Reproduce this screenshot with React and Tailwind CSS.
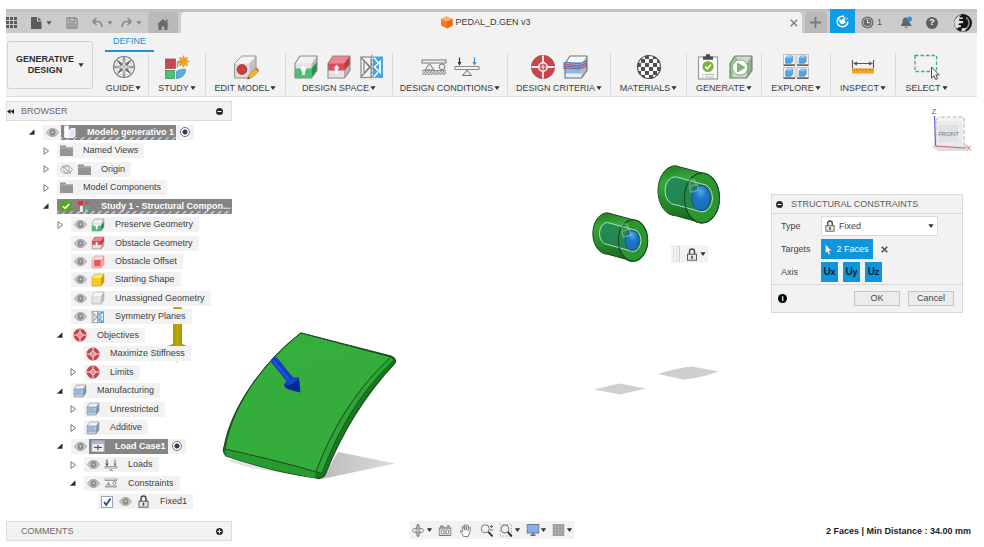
import React from "react";

/* ---------- small shared glyphs ---------- */

function Caret({ className = "text-[#2f2f2f]" }) {
  return (
    <svg className={"h-1 w-1.5 shrink-0 " + className} viewBox="0 0 6 4" fill="currentColor" aria-hidden="true">
      <path d="M.4.2h5.2L3 3.9z" />
    </svg>
  );
}

function Eye({ off }) {
  return (
    <svg className="h-[9px] w-[13px]" viewBox="0 0 13 9" aria-hidden="true">
      <path d="M.5 4.5C2.6 1.4 4.4.6 6.5.6s3.9.8 6 3.9C10.4 7.6 8.6 8.4 6.5 8.4S2.600 7.600.5 4.500z" fill={off ? "#f7f7f7" : "#cfcfcf"} stroke="#9a9a9a" strokeWidth="1" />
      <circle cx="6.5" cy="4.5" r="2.9" fill={off ? "none" : "#858585"} stroke="#9a9a9a" strokeWidth=".8" />
      {off ? <path d="M2 .8l9 7.6" stroke="#9a9a9a" strokeWidth="1" /> : <circle cx="6.5" cy="4.3" r="1.1" fill="#d8d8d8" />}
    </svg>
  );
}

function Block({ front, top, side, line = "#8a8a8a", className = "h-[26px] w-[26px]", children }) {
  return (
    <svg className={className} viewBox="0 0 26 26" aria-hidden="true" strokeLinejoin="round">
      <path d="M2 9.5L7 2h17v14.500L18.500 24H2z" fill={front} />
      <path d="M2 9.5L7 2h17l-5.500 7.500z" fill={top} />
      <path d="M18.500 9.500L24 2v14.500L18.500 24z" fill={side} />
      {children}
      <path d="M2 9.500L7 2h17v14.500L18.500 24H2z" fill="none" stroke={line} strokeWidth="1.1" />
    </svg>
  );
}

const SMALL = "h-[14px] w-[14px]";
const BIG = "h-[26px] w-[26px]";

function PreserveIcon({ className = BIG }) {
  return (
    <Block className={className} front="#e4e4e4" top="#f1f1f1" side="#bdbdbd">
      <path d="M2 14.500h16.500V24H2z" fill="#45c274" />
      <path d="M18.500 14.500L24 7.500v9L18.500 24z" fill="#249250" />
      <path d="M8 15.500a2.600 2.600 0 115 0c0 1.300-1.200 1.800-1.200 3v2.500H9.300v-2.500c0-1.200-1.300-1.700-1.300-3z" fill="#fff" />
    </Block>
  );
}

function ObstacleIcon({ className = BIG }) {
  return (
    <Block className={className} front="#d84e58" top="#f0848a" side="#b83b45">
      <path d="M2 16.500h16.500V24H2z" fill="#e2e2e2" />
      <path d="M18.500 16.500L24 10v6.500L18.500 24z" fill="#b5b5b5" />
      <path d="M10.500 10.500l3 4h-1.600v5H9v-5H7.400z" fill="#fff" />
    </Block>
  );
}

function SymmetryIcon({ className = BIG }) {
  return (
    <svg className={className} viewBox="0 0 26 26" aria-hidden="true">
      <rect x="2" y="3" width="10" height="20.500" fill="#f4f4f4" stroke="#8e8e8e" strokeWidth="1.300" />
      <rect x="14" y="2.500" width="10" height="21.500" fill="#4aa6e2" />
      <path d="M5 6.500v13l5.500-6.500zM2 3.500l9.500 9.500L2 23" fill="none" stroke="#858585" strokeWidth="1.200" />
      <path d="M22 6l-7 7 7 7" fill="#f4f9fd" stroke="#f4f9fd" strokeWidth="1" />
      <path d="M15 3.500l4 5M15 23l4-5" fill="none" stroke="#f4f9fd" strokeWidth="1.400" />
      <path d="M20 9.500v7L16.500 13z" fill="#4aa6e2" />
      <path d="M13 1v24.500" stroke="#777" strokeWidth="1" strokeDasharray="3 1" />
    </svg>
  );
}

function TargetIcon({ className = BIG }) {
  return (
    <svg className={className} viewBox="0 0 26 26" aria-hidden="true">
      <circle cx="13" cy="13" r="8.300" fill="#fff" stroke="#c9454c" strokeWidth="6.800" />
      <circle cx="13" cy="13" r="11.600" fill="none" stroke="#a5464c" strokeWidth=".8" />
      <path d="M13 1.500v23M1.500 13h23" stroke="#f2f2f2" strokeWidth="1.800" />
      <circle cx="13" cy="13" r="4" fill="#c9454c" stroke="#f5e6e6" strokeWidth="1.300" />
      <path d="M13 10.500v5M10.500 13h5" stroke="#f5e6e6" strokeWidth="1.200" />
    </svg>
  );
}

function LayersIcon({ className = BIG }) {
  return (
    <Block className={className} front="#e9edf1" top="#fafafa" side="#b4b9be" line="#6b6f74">
      <path d="M2 8.500h16.500v11H2z" fill="#86bce8" />
      <path d="M0 11c6-1.500 12 1.500 18.500 0L24 8.500M0 14.500c6-1.500 12 1.500 18.500 0L24 12" fill="none" stroke="#b8435a" strokeWidth="1" />
      <path d="M0 9c6-1.500 12 1.500 18.500 0L24 6.500M0 12.800c6-1.500 12 1.500 18.500 0L24 10" fill="none" stroke="#2d5fb0" strokeWidth=".9" />
    </Block>
  );
}

function MakeIcon() {
  return (
    <Block className={SMALL} front="#b9d2e8" top="#eef1f4" side="#8f9aa6" line="#7d8794">
      <path d="M2 9.500h16.500M2 18.500h16.500L24 11" fill="none" stroke="#7490b3" strokeWidth="1.600" />
      <path d="M4 11h12v6H4z" fill="#9ab8d8" />
    </Block>
  );
}

function Lock({ className = "h-[13px] w-[11px]" }) {
  return (
    <svg className={className} viewBox="0 0 11 13" aria-hidden="true">
      <path d="M3 6.500V3.700a2.500 2.700 0 015 0v2.800" fill="none" stroke="#4a4a4a" strokeWidth="1.500" />
      <rect x="1" y="6.200" width="9" height="6" fill="#e6e8ee" stroke="#5a5a5a" strokeWidth="1" />
      <path d="M5.500 7.700v3" stroke="#333a55" strokeWidth="1.500" />
    </svg>
  );
}

function Folder() {
  return (
    <svg className="h-[11px] w-[13px]" viewBox="0 0 13 11" aria-hidden="true">
      <path d="M0 .5h6v1.800h7V11H0z" fill="#949494" />
      <path d="M0 3h13" stroke="#bdbdbd" strokeWidth=".8" />
    </svg>
  );
}

function Support({ className = "h-[26px] w-[26px]" }) {
  return (
    <svg className={className} viewBox="0 0 26 26" aria-hidden="true">
      <rect x="1" y="6" width="24" height="3" fill="#f1f1f1" stroke="#777" strokeWidth="1" />
      <path d="M8.500 9.500l4.500 6.500H4z" fill="#ededed" stroke="#777" strokeWidth="1" />
      <circle cx="21" cy="12.800" r="2.900" fill="#ededed" stroke="#777" strokeWidth="1" />
      <path d="M1 16.500h24V21H1z" fill="#cccccc" />
      <path d="M1 21l4-4M4 21l4-4M7 21l4-4M10 21l4-4M13 21l4-4M16 21l4-4M19 21l4-4M22 21l3-3M1 16.500h24" stroke="#8a8a8a" strokeWidth=".9" />
    </svg>
  );
}

function LoadsIcon({ className = "h-[26px] w-[26px]" }) {
  return (
    <svg className={className} viewBox="0 0 26 26" aria-hidden="true">
      <rect x="1" y="12.500" width="24" height="3" fill="#f3f3f3" stroke="#8a8a8a" strokeWidth="1" />
      <path d="M13 16l4.500 5.500h-9z" fill="#e6e6e6" stroke="#777" strokeWidth="1" />
      <path d="M5.500 3.500v6" stroke="#333" strokeWidth="1.200" />
      <path d="M3.500 8h4l-2 3.800z" fill="#333" />
      <path d="M20.500 3.500v6" stroke="#2b93d6" strokeWidth="1.200" />
      <path d="M18.500 8h4l-2 3.800z" fill="#2b93d6" />
    </svg>
  );
}

/* ---------- ribbon artwork ---------- */

function CompassIcon() {
  return (
    <svg className={BIG} viewBox="0 0 26 26" aria-hidden="true">
      <circle cx="13" cy="13" r="10.500" fill="#fafafa" stroke="#7a7a7a" strokeWidth="1.100" />
      <circle cx="13" cy="13" r="8" fill="none" stroke="#b5b5b5" strokeWidth=".7" />
      <path d="M6.500 6.500l5 3.500-1.500 1.500zM19.500 6.500l-3.500 5-1.500-1.500zM6.500 19.500l3.500-5 1.500 1.500zM19.500 19.500l-5-3.500 1.500-1.500z" fill="#6d6d6d" stroke="#6d6d6d" strokeWidth="1" />
      <path d="M13 2l1.600 9.400L24 13l-9.400 1.600L13 24l-1.600-9.400L2 13l9.400-1.600z" fill="#fff" stroke="#777" strokeWidth=".7" />
      <path d="M13 2v22M2 13h22" stroke="#888" strokeWidth=".7" />
    </svg>
  );
}

function StudyIcon({ className = BIG }) {
  return (
    <svg className={className} viewBox="0 0 26 26" aria-hidden="true">
      <rect x="1.500" y="5" width="10" height="9.500" fill="#c8484f" stroke="#a8454b" strokeWidth=".7" />
      <rect x="1.500" y="16.500" width="9" height="8" fill="#52bd7a" stroke="#2c8a50" strokeWidth=".7" />
      <path d="M12.500 17.500c2-1.700 4.500-2.200 9-2-.3 5-3 8.500-9 9z" fill="#62aee4" stroke="#377fb5" strokeWidth=".7" />
      <path d="M13.500 13.500V8.500h3" fill="none" stroke="#52bd7a" strokeWidth="1.500" />
      <path d="M19.500 1.500l1.200 3 3-1.200-1.300 3L25.500 7.500l-3.100 1.200 1.300 3-3-1.200-1.200 3-1.200-3-3 1.200 1.300-3-3.100-1.200 3.100-1.200-1.300-3 3 1.200z" fill="#f3a21b" stroke="#db8a10" strokeWidth=".5" />
    </svg>
  );
}

function EditModelIcon() {
  return (
    <svg className={BIG} viewBox="0 0 26 26" aria-hidden="true">
      <path d="M1.500 9.500L9 2h14v13.500L16.500 24h-15z" fill="#dcdcdc" />
      <path d="M1.500 9.500L9 2h14l-6.500 7.500z" fill="#f3f3f3" />
      <path d="M16.500 9.500L23 2v13.500L16.500 24z" fill="#c2c2c2" />
      <path d="M1.500 9.500L9 2h14v13.500L16.500 24h-15z" fill="none" stroke="#969696" strokeWidth="1" strokeLinejoin="round" />
      <circle cx="9" cy="15.500" r="4.900" fill="#cb3f3f" stroke="#9c2c2c" strokeWidth=".8" />
      <path d="M14.500 25l1.300-4.200 6.500-6.300 3 3-6.600 6.200z" fill="#f0b429" stroke="#a77a18" strokeWidth=".6" />
      <path d="M22.300 14.500l3 3 .7-1.200-2.500-2.900z" fill="#e2504e" />
      <path d="M14.500 25l.6-2 1.500 1.500z" fill="#333" />
    </svg>
  );
}

function MaterialsIcon() {
  const cells = [];
  for (let r = 0; r < 6; r++) {
    for (let c = 0; c < 6; c++) {
      if ((r + c) % 2 === 0) cells.push(<rect key={r + "-" + c} x={1 + c * 4} y={1 + r * 4} width="4" height="4" />);
    }
  }
  return (
    <svg className={BIG} viewBox="0 0 26 26" aria-hidden="true">
      <defs>
        <clipPath id="ball"><circle cx="13" cy="13" r="12" /></clipPath>
      </defs>
      <circle cx="13" cy="13" r="12" fill="#fafafa" />
      <g clipPath="url(#ball)" fill="#505050">{cells}</g>
      <circle cx="13" cy="13" r="11.500" fill="none" stroke="#555" strokeWidth="1.200" />
    </svg>
  );
}

function ClipboardIcon() {
  return (
    <svg className={BIG} viewBox="0 0 26 26" aria-hidden="true">
      <rect x="3.500" y="3" width="19" height="22" fill="#fff" stroke="#999" strokeWidth="1.200" />
      <path d="M8 2.500h2.600a2.300 2.300 0 014.800 0H18v3.300H8z" fill="#4a4a4a" />
      <circle cx="13" cy="12.500" r="5.600" fill="#7fb238" />
      <path d="M10.300 12.600l2 2.100 3.500-4" fill="none" stroke="#fff" strokeWidth="1.600" />
      <path d="M7 20.500h1.500M10 20.500h9M7 23h1.500M10 23h9" stroke="#aaa" strokeWidth="1" />
    </svg>
  );
}

function PlayIcon() {
  return (
    <Block front="#c4dfbe" top="#d4d8d3" side="#8eb187" line="#777">
      <path d="M2 9.500L7 2l3 3-5 8v11H2z" fill="#8fca86" />
      <circle cx="12" cy="13.500" r="7.600" fill="#fff" stroke="#8ba886" strokeWidth="1" />
      <path d="M9.500 9l7.500 4.500-7.500 4.500z" fill="#76bd70" stroke="#56994f" strokeWidth=".6" />
    </Block>
  );
}

function ExploreIcon() {
  const tile = (x, y) => (
    <g key={x + "-" + y}>
      <rect x={x} y={y} width="11.500" height="10" fill="#eef4f9" stroke="#c0b5b0" strokeWidth=".8" />
      <path d={`M${x} ${y + 10.7}h11.500`} stroke="#555" strokeWidth="1.400" />
      <path d={`M${x + 2.2} ${y + 3.2}l1.700-1.700h5.200v5.300l-1.600 1.900h-5.300z`} fill="#56a6e4" stroke="#3c88c6" strokeWidth=".7" />
      <path d={`M${x + 2.2} ${y + 3.2}h5.300l1.600-1.700h-5.200z`} fill="#98cbf0" />
    </g>
  );
  return (
    <svg className={BIG} viewBox="0 0 26 26" aria-hidden="true">
      {[[0.5, 0.5], [14, 0.5], [0.5, 13.5], [14, 13.5]].map(([x, y]) => tile(x, y))}
    </svg>
  );
}

function InspectIcon() {
  return (
    <svg className={BIG} viewBox="0 0 26 26" aria-hidden="true">
      <path d="M2.500 6v8M23.500 6v8M4 9.500h18" stroke="#555" strokeWidth="1.100" />
      <path d="M3 9.500l4-2v4zM23 9.500l-4-2v4z" fill="#555" />
      <rect x="2" y="14.500" width="22" height="5" fill="#f5a51e" />
      <path d="M4 16.500v-2M7 16.500v-2M10 16.500v-2M13 16.500v-2M16 16.500v-2M19 16.500v-2M22 16.500v-2" stroke="#a96c0e" strokeWidth=".9" />
    </svg>
  );
}

function SelectIcon() {
  return (
    <svg className={BIG} viewBox="0 0 26 26" aria-hidden="true">
      <rect x="1" y="1.500" width="21.500" height="16" fill="none" stroke="#43b06a" strokeWidth="1.300" strokeDasharray="3.500 2" />
      <path d="M17.500 13v11l2.500-2.300 1.700 3.800 1.900-.9-1.700-3.700h3.300z" fill="#fff" stroke="#444" strokeWidth="1" />
    </svg>
  );
}

/* ---------- top bar ---------- */

function IconButton({ label, className = "", children }) {
  return (
    <button type="button" aria-label={label} className={"flex items-center justify-center " + className}>
      {children}
    </button>
  );
}

function TopBar() {
  return (
    <div className="flex h-6 items-stretch border-t-[3px] border-[#c1c1c1] bg-[#cbcbcb]">
      <div className="flex items-center gap-3.5 text-[#5c5c5c]">
        <IconButton label="Data panel">
          <svg className="h-[11px] w-[11px]" viewBox="0 0 11 11" fill="currentColor">
            {[0, 4, 8].map((y) => [0, 4, 8].map((x) => <rect key={x + "-" + y} x={x} y={y} width="3" height="3" />))}
          </svg>
        </IconButton>
        <IconButton label="File" className="gap-1">
          <svg className="h-3 w-[11px]" viewBox="0 0 11 12" fill="currentColor">
            <path d="M0 0h6v4.500h4.500V12H0zM7 0l3.500 3.500H7z" />
          </svg>
          <Caret className="text-[#5c5c5c]" />
        </IconButton>
        <IconButton label="Save">
          <svg className="h-3 w-3" viewBox="0 0 12 12" fill="none" stroke="#8a8a8a" strokeWidth="1.300">
            <path d="M1 1h8.500L11 2.500V11H1zM3.500 1v3.500h5V1M3 11V7h6v4M4.500 9h3" />
          </svg>
        </IconButton>
        <div className="flex gap-2 text-[#8a8a8a]">
          <IconButton label="Undo" className="gap-1">
            <svg className="h-[11px] w-[11px]" viewBox="0 0 11 11" fill="none" stroke="currentColor" strokeWidth="1.600">
              <path d="M4.500 1L1 4.500 4.500 8M1 4.500h5c2.500 0 3.800 1.500 3.800 5.500" />
            </svg>
            <Caret className="text-[#8a8a8a]" />
          </IconButton>
          <IconButton label="Redo" className="gap-1">
            <svg className="h-[11px] w-[11px]" viewBox="0 0 11 11" fill="none" stroke="currentColor" strokeWidth="1.600">
              <path d="M6.500 1L10 4.500 6.500 8M10 4.500H5C2.500 4.500 1.200 6 1.200 10" />
            </svg>
            <Caret className="text-[#8a8a8a]" />
          </IconButton>
        </div>
      </div>
      <IconButton label="Home" className="ml-1.5 w-[30px] rounded-t-sm bg-[#b9b9b9]">
        <svg className="mt-1 h-[11px] w-3" viewBox="0 0 12 11" fill="#686868">
          <path d="M6 0l6 5.500h-1.500V11H7.300V7.500H4.700V11H1.500V5.500H0L6 0zM9 .8h1.500v3L9 2.500z" />
        </svg>
      </IconButton>
      <div className="ml-[3px] flex flex-1 items-center rounded-t-sm bg-[#f2f2f2]">
        <div className="flex flex-1 items-center justify-center gap-0.5 text-[#3c3c3c]">
          <svg className="h-[13px] w-[13px]" viewBox="0 0 13 13" aria-hidden="true">
            <path d="M6.500.5L12.500 3v6.500l-5.500 3-6-3V3z" fill="#f47b20" />
            <path d="M6.500.5L12.500 3 7 5.500 1 3z" fill="#fbb06e" />
            <path d="M7 5.500L12.500 3v6.500l-5.500 3z" fill="#e56a18" />
          </svg>
          <span>PEDAL_D.GEN v3</span>
        </div>
        <IconButton label="Close document" className="mr-1 h-4 w-2">
          <svg className="h-2 w-2 shrink-0" viewBox="0 0 8 8" stroke="#7a7a7a" strokeWidth="1.300">
            <path d="M.8.8l6.400 6.400M7.200.8L.8 7.200" />
          </svg>
        </IconButton>
      </div>
      <IconButton label="New document" className="ml-[3px] w-[22px] rounded-t-sm bg-[#bababa]">
        <svg className="h-[11px] w-[11px]" viewBox="0 0 11 11" stroke="#7a7a7a" strokeWidth="1.800">
          <path d="M5.500 0v11M0 5.500h11" />
        </svg>
      </IconButton>
      <IconButton label="Extensions" className="-mt-[3px] ml-[3px] w-[25px] bg-[#0e9ce6]">
        <svg className="h-[13px] w-[13px]" viewBox="0 0 13 13">
          <circle cx="6.500" cy="6.500" r="5.300" fill="none" stroke="#fff" strokeWidth="1.600" strokeDasharray="26 3 1 3.300" />
          <path d="M3.200 4l2.300 1L9.500 1.500 8.700 5l1 2.500-3 1.800-2.200-.8-1.300-2z" fill="#fff" />
        </svg>
      </IconButton>
      <div className="flex items-center pl-1.5 text-[#555]">
        <IconButton label="Job status" className="gap-[3px]">
          <svg className="h-[13px] w-[13px]" viewBox="0 0 13 13">
            <circle cx="6.500" cy="6.500" r="6" fill="#686868" />
            <circle cx="6.500" cy="6.500" r="4.300" fill="none" stroke="#cbcbcb" strokeWidth=".9" />
            <path d="M6.500 3.500v3.200h2.500" fill="none" stroke="#e5e5e5" strokeWidth="1.100" />
          </svg>
          <span>1</span>
        </IconButton>
        <IconButton label="Notifications" className="ml-[18px]">
          <svg className="h-[13px] w-[13px]" viewBox="0 0 13 13">
            <path d="M6 1.500c2.200 0 3.500 1.500 3.500 3.700 0 2 .7 3 2 3.800v1H.7V9c1.200-.8 1.900-1.800 1.900-3.800C2.600 3 3.800 1.500 6 1.500zM4.500 10.700h3.200L6 12.500z" fill="#646464" />
            <circle cx="9.600" cy="3" r="2.500" fill="#1c9ce4" />
          </svg>
        </IconButton>
        <button type="button" aria-label="Help" className="ml-[13px] flex h-3 w-3 items-center justify-center rounded-full bg-[#5e5e5e] font-bold text-white">?</button>
        <button type="button" aria-label="Account" className="mr-[5px] ml-4 h-[18px] w-[18px]">
          <svg className="h-[18px] w-[18px]" viewBox="0 0 18 18">
            <circle cx="9" cy="9" r="9" fill="#151515" />
            <path d="M2 4.500C3.500 2 5 1.200 7 1L5 3.500h4L8.500 5H5l.5 2H9v2L5 9.500l-1 1 3 1v1.500l-3 .5L3.500 15C1.500 13.500.3 11.500.2 9c0-1.500.6-3.300 1.800-4.500z" fill="#dedede" />
            <path d="M12 3.500c2 1 3 3 3 5.500s-1.500 4.500-3 5.500" fill="none" stroke="#8a8a8a" strokeWidth="1.500" />
            <path d="M8 14l5 0-2.500 3.500H7z" fill="#cfcfcf" />
          </svg>
        </button>
      </div>
    </div>
  );
}

/* ---------- ribbon ---------- */

const GROUPS = [
  { label: "GUIDE", width: "w-[50px]", icons: [CompassIcon] },
  { label: "STUDY", width: "w-[57px]", icons: [StudyIcon] },
  { label: "EDIT MODEL", width: "w-[80px]", icons: [EditModelIcon] },
  { label: "DESIGN SPACE", width: "w-[107px]", icons: [PreserveIcon, ObstacleIcon, SymmetryIcon] },
  { label: "DESIGN CONDITIONS", width: "w-[115px]", icons: [Support, LoadsIcon] },
  { label: "DESIGN CRITERIA", width: "w-[103px]", icons: [TargetIcon, LayersIcon] },
  { label: "MATERIALS", width: "w-[76px]", icons: [MaterialsIcon] },
  { label: "GENERATE", width: "w-[75px]", icons: [ClipboardIcon, PlayIcon] },
  { label: "EXPLORE", width: "w-[69px]", icons: [ExploreIcon] },
  { label: "INSPECT", width: "w-[65px]", icons: [InspectIcon] },
  { label: "SELECT", width: "w-[61px]", icons: [SelectIcon] },
];

function Ribbon() {
  return (
    <div className="flex border-b border-[#dedede] bg-[#f2f2f2] pl-px">
      <button type="button" className="mt-2 flex h-12 w-[86px] shrink-0 items-center justify-center gap-1 rounded-[3px] border border-[#d2d2d2] font-bold text-[#2e2e2e]">
        <span className="leading-[11px]">GENERATIVE<br />DESIGN</span>
        <Caret />
      </button>
      <div className="ml-1.5 flex-1">
        <button type="button" className="ml-1.5 block h-[19px] w-[49px] border-b-2 border-[#1a93d4] text-[#1a93d4]">DEFINE</button>
        <div className="flex h-11">
          {GROUPS.map(({ label, width, icons }, i) => (
            <div
              key={label}
              className={"my-px flex shrink-0 flex-col items-center gap-0.5 pt-px " + width + (i < GROUPS.length - 1 ? " border-r border-[#d9d9d9]" : "")}
            >
              <div className="flex gap-[7px]">
                {icons.map((Icon, n) => <Icon key={n} />)}
              </div>
              <button type="button" className="flex h-3 items-center gap-px whitespace-nowrap text-[#3c3c3c]">
                {label}
                <Caret />
              </button>
            </div>
          ))}
        </div>
      </div>
    </div>
  );
}

/* ---------- browser tree ---------- */

const INDENT = ["pl-[15px]", "pl-[29px]", "pl-[43px]", "pl-[56px]", "pl-[70px]"];

const DocIcon = () => (
  <svg className={SMALL} viewBox="0 0 14 14">
    <path d="M1.500 1h4v11.500h-4z" fill="#fff" stroke="#e8e8e8" />
    <path d="M6.500 5l1.500-1.500h4V11l-1.500 1.500h-4z" fill="#dfe3f5" stroke="#fafafa" />
  </svg>
);
const CheckBadge = () => (
  <svg className="h-3 w-3" viewBox="0 0 12 12">
    <circle cx="6" cy="6" r="6" fill="#59a818" />
    <path d="M3 6.200l2.200 2.200L9.200 4" fill="none" stroke="#fff" strokeWidth="1.600" />
  </svg>
);
const StudyMini = () => (
  <svg className={SMALL} viewBox="0 0 14 14">
    <path d="M1 2h5v4H1z" fill="#d9363e" />
    <path d="M8 2h4.500v3.500H8z" fill="#e04d55" />
    <path d="M3 7h3v6H3z" fill="#e8e8e8" />
    <path d="M8 6.500h4V10H8z" fill="#4cb66c" />
    <path d="M8 10.500h3V13H8z" fill="#8fc1ec" />
  </svg>
);
const OffsetIcon = () => (
  <Block className={SMALL} front="#f7c3c5" top="#fbe0e0" side="#efabae" line="#d9787d">
    <path d="M6 9h12v12H6z" fill="#e0575e" />
  </Block>
);
const ShapeIcon = () => <Block className={SMALL} front="#f7ce1d" top="#fde87a" side="#c99f0c" line="#b8961f" />;
const UnassignedIcon = () => <Block className={SMALL} front="#e3e3e3" top="#f7f7f7" side="#bcbcbc" line="#a8a8a8" />;
const SmallPreserve = () => <PreserveIcon className={SMALL} />;
const SmallObstacle = () => <ObstacleIcon className={SMALL} />;
const SmallSymmetry = () => <SymmetryIcon className={SMALL} />;
const SmallTarget = () => <TargetIcon className={SMALL} />;
const SmallLoads = () => (
  <svg className={SMALL} viewBox="0 0 14 14">
    <path d="M1 8.500h12v1.500H1z" fill="#fff" stroke="#888" strokeWidth=".8" />
    <path d="M7 10.500L9.500 13h-5z" fill="#aaa" />
    <path d="M3 1.500v6M1.800 5.500L3 7.500l1.200-2" fill="none" stroke="#444" />
    <path d="M11 1.500v6M9.800 5.500l1.200 2 1.200-2" fill="none" stroke="#3a7fc0" />
  </svg>
);
const SmallSupport = () => (
  <svg className={SMALL} viewBox="0 0 14 14">
    <path d="M1 3h12v1.500H1z" fill="#fff" stroke="#888" strokeWidth=".8" />
    <path d="M4.500 5.500L6.500 9h-4z" fill="#999" />
    <circle cx="10.500" cy="7" r="1.500" fill="none" stroke="#888" />
    <path d="M1 9.500h12v2H1z" fill="#a5a5a5" />
  </svg>
);
const EyeOff = () => <Eye off />;
const LoadCaseIcon = () => (
  <svg className={SMALL} viewBox="0 0 14 14">
    <rect x="1" y="2" width="12" height="10.500" fill="#e9ecf3" stroke="#c6c6c6" />
    <path d="M1 2h12v3H1z" fill="#a9b4cf" />
    <path d="M3 8.500h8M7 6v5" stroke="#414c66" strokeWidth="1.200" />
  </svg>
);

const NODES = [
  { level: 0, arrow: "open", lead: [Eye], icon: [DocIcon], label: "Modelo generativo 1", selected: true, hatch: true, radio: "component" },
  { level: 1, arrow: "closed", icon: [Folder], label: "Named Views" },
  { level: 1, arrow: "closed", icon: [EyeOff, Folder], label: "Origin" },
  { level: 1, arrow: "closed", icon: [Folder], label: "Model Components" },
  { level: 1, arrow: "open", icon: [CheckBadge, StudyMini], label: "Study 1 - Structural Compon...", selected: true, hatch: true, fill: true },
  { level: 2, arrow: "closed", icon: [Eye, SmallPreserve], label: "Preserve Geometry" },
  { level: 2, icon: [Eye, SmallObstacle], label: "Obstacle Geometry" },
  { level: 2, icon: [Eye, OffsetIcon], label: "Obstacle Offset" },
  { level: 2, icon: [Eye, ShapeIcon], label: "Starting Shape" },
  { level: 2, icon: [Eye, UnassignedIcon], label: "Unassigned Geometry" },
  { level: 2, icon: [Eye, SmallSymmetry], label: "Symmetry Planes" },
  { level: 2, arrow: "open", icon: [SmallTarget], label: "Objectives" },
  { level: 3, icon: [SmallTarget], label: "Maximize Stiffness" },
  { level: 3, arrow: "closed", icon: [SmallTarget], label: "Limits" },
  { level: 2, arrow: "open", icon: [MakeIcon], label: "Manufacturing" },
  { level: 3, arrow: "closed", icon: [MakeIcon], label: "Unrestricted" },
  { level: 3, arrow: "closed", icon: [MakeIcon], label: "Additive" },
  { level: 2, arrow: "open", lead: [Eye], icon: [LoadCaseIcon], label: "Load Case1", selected: true, radio: "load case" },
  { level: 3, arrow: "closed", icon: [Eye, SmallLoads], label: "Loads" },
  { level: 3, arrow: "open", icon: [Eye, SmallSupport], label: "Constraints" },
  { level: 4, check: true, icon: [Eye, Lock], label: "Fixed1" },
];

function Slot({ children }) {
  return <span className="relative flex w-[18px] shrink-0 items-center justify-center">{children}</span>;
}

function TreeRow({ node }) {
  const { level, arrow, lead = [], icon, label, selected, hatch, fill, radio, check } = node;
  return (
    <li className={"flex min-h-4 flex-1 items-center " + INDENT[level]}>
      <span className="flex w-[22px] shrink-0 justify-center">
        {arrow && (
          <button type="button" aria-label={(arrow === "open" ? "Collapse " : "Expand ") + label}>
            <svg className="h-2 w-2" viewBox="0 0 8 8">
              {arrow === "open"
                ? <path d="M6.500 1.200v5.600H.9z" fill="#2c2c2c" />
                : <path d="M2 .6v6.800L6.500 4z" fill="#fff" stroke="#6a6a6a" strokeWidth=".9" />}
            </svg>
          </button>
        )}
      </span>
      <div className={"flex h-[15px] items-center bg-[#f2f2f2]" + (fill ? " min-w-0 flex-1" : "")}>
        {check && (
          <Slot>
            <input type="checkbox" defaultChecked aria-label={"Show " + label} className="peer h-3 w-3 appearance-none border border-[#9aa3b5] bg-white" />
            <svg className="pointer-events-none absolute hidden h-2.5 w-2.5 peer-checked:block" viewBox="0 0 10 10">
              <path d="M2 5l2.200 3L8.500 1.500" fill="none" stroke="#2b4596" strokeWidth="1.800" />
            </svg>
          </Slot>
        )}
        {lead.map((Icon, i) => <Slot key={i}><Icon /></Slot>)}
        <span
          className={
            "flex h-full items-center " +
            (selected ? "bg-[#858585] font-bold text-white " : "text-[#404040] ") +
            (hatch ? "bg-[repeating-linear-gradient(135deg,#b4c0da_0_2px,#858585_2px_5px)] bg-[length:100%_3px] bg-bottom bg-no-repeat " : "") +
            (fill ? "min-w-0 flex-1" : "")
          }
        >
          {icon.map((Icon, i) => <Slot key={i}><Icon /></Slot>)}
          <span className={"whitespace-nowrap pl-2 " + (selected ? "pr-0.5" : "pr-1.5")}>{label}</span>
        </span>
        {radio && (
          <Slot>
            <input
              type="radio"
              name={radio}
              defaultChecked
              aria-label={"Activate " + label}
              className="h-2.5 w-2.5 appearance-none rounded-full border border-[#6f7480] bg-[radial-gradient(circle,#2f3c55_0_2px,#fff_3px)]"
            />
          </Slot>
        )}
      </div>
    </li>
  );
}

function PanelHeader({ title, children, sign }) {
  return (
    <div className="flex h-5 shrink-0 items-center border border-[#dcdcdc] bg-[#f2f2f2] pr-2 text-[#6a6a6a]">
      <span className="flex w-3.5 shrink-0">{children}</span>
      <h2 className="flex-1">{title}</h2>
      <button type="button" aria-label={"Toggle " + title}>
        <svg className="h-[7px] w-[7px]" viewBox="0 0 7 7">
          <circle cx="3.500" cy="3.500" r="3.500" fill="#2b2b2b" />
          <path d={sign === "plus" ? "M1.500 3.500h4M3.500 1.500v4" : "M1.500 3.500h4"} stroke="#fff" strokeWidth="1" />
        </svg>
      </button>
    </div>
  );
}

function Browser() {
  return (
    <aside className="relative ml-1.5 flex min-h-0 w-[226px] flex-1 flex-col pt-1 pb-1.5">
      <PanelHeader title="BROWSER" sign="minus">
        <svg className="h-[5px] w-[7px]" viewBox="0 0 7 5" fill="#222">
          <path d="M3.500 0v5L0 2.500zM7 0v5L3.500 2.500z" />
        </svg>
      </PanelHeader>
      <ul className="mt-0.5 mb-2.5 flex flex-1 flex-col">
        {NODES.map((node) => <TreeRow key={node.label} node={node} />)}
      </ul>
      <PanelHeader title="COMMENTS" sign="plus" />
    </aside>
  );
}

/* ---------- 3D viewport ---------- */

function Cylinder({ back, front, rx, ry, bore }) {
  const [bx, by] = back;
  const [fx, fy] = front;
  return (
    <g>
      <path
        d={`M${bx} ${by - ry}L${fx} ${fy - ry}A${rx} ${ry} 0 0 1 ${fx} ${fy + ry}L${bx} ${by + ry}A${rx} ${ry} 0 0 1 ${bx} ${by - ry}z`}
        fill="url(#barrel)"
        stroke="#1d4a20"
        strokeWidth="1"
      />
      <ellipse cx={fx} cy={fy} rx={rx} ry={ry} fill="#2b962f" stroke="#1d4a20" strokeWidth="1.100" />
      <path
        d={`M${bx} ${by - bore.ry}L${fx} ${fy - bore.ry}A${bore.rx} ${bore.ry} 0 0 1 ${fx} ${fy + bore.ry}L${bx} ${by + bore.ry}A${bore.rx} ${bore.ry} 0 0 1 ${bx} ${by - bore.ry}z`}
        fill="#20855a"
        fillOpacity=".8"
        stroke="#b9dcc2"
        strokeWidth="1"
      />
      <path d={`M${fx} ${fy - ry}A${rx} ${ry} 0 0 0 ${fx} ${fy + ry}`} fill="none" stroke="#1d4a20" strokeWidth="1.100" />
      <ellipse cx={fx - bore.rx * 0.1} cy={fy} rx={bore.rx * 0.88} ry={bore.ry * 0.9} fill="url(#bore)" stroke="#134a86" strokeWidth=".8" />
      <g transform={`translate(${fx - rx * 0.5} ${fy - ry * 0.5}) rotate(-15)`} fill="none" stroke="#a9d4ae" strokeOpacity=".45" strokeWidth="1.500">
        <path d="M-3 -1v-2.500a3 3 0 016 0V-1M-4 0h8v6h-8z" />
      </g>
    </g>
  );
}

function Viewport() {
  return (
    <svg className="absolute inset-0 h-full w-full" viewBox="0 97 984 450" role="img" aria-label="Pedal model">
      <defs>
        <linearGradient id="barrel" x1="0" y1="0" x2="0.2" y2="1">
          <stop offset="0" stopColor="#1d7a22" />
          <stop offset=".3" stopColor="#35a83a" />
          <stop offset="1" stopColor="#176a1c" />
        </linearGradient>
        <radialGradient id="bore" cx=".5" cy=".25" r=".8">
          <stop offset="0" stopColor="#5aa5ea" />
          <stop offset=".35" stopColor="#1f7ac8" />
          <stop offset="1" stopColor="#1a6ab4" />
        </radialGradient>
        <linearGradient id="plate" x1="0.3" y1="0" x2="0.6" y2="1">
          <stop offset="0" stopColor="#35ae3c" />
          <stop offset="1" stopColor="#34ac3d" />
        </linearGradient>
        <linearGradient id="floor" x1="0" y1="0" x2="1" y2="0">
          <stop offset="0" stopColor="#bcbcbc" />
          <stop offset="1" stopColor="#dcdcdc" />
        </linearGradient>
        <linearGradient id="post" x1="0" y1="0" x2="1" y2="0">
          <stop offset="0" stopColor="#8f7d00" />
          <stop offset=".5" stopColor="#c0a900" />
          <stop offset="1" stopColor="#8f7d00" />
        </linearGradient>
      </defs>

      {/* starting-shape post behind the tree */}
      <path d="M173 308l2-1h5l2 1v36l5 2v1h-19v-1l5-2z" fill="url(#post)" />
      <circle cx="177" cy="362" r=".7" fill="#d8c45a" />

      {/* floor shadows */}
      <path d="M338 452L395 463.500 322 479z" fill="url(#floor)" />
      <path d="M228 461c8-4 20-4 30 0l50 14c-30-1-60-7-80-14z" fill="#e2e2e2" />
      <path d="M594 389.500L619 383.500 646 388.500 620 394.500z" fill="#cfcfcf" />
      <path d="M658 374Q680 367 692 366.500L719 371.500Q697 379 683 379.500z" fill="#cfcfcf" />

      {/* pedal plate */}
      <path d="M301 333L391 356Q397 359 395 363C364 396 342 432 325 475Q321 480 316 478C285 474 250 464 226 456Q222 452 224 447C232 404 266 360 301 333z" fill="#187a20" stroke="#1a4a1e" strokeWidth="1.100" />
      <path d="M225 449C256 456 290 464 316 472L315 478C285 473 250 464 226 456z" fill="#279a30" />
      <path d="M301 333L391 357C358 388 334 424 316 472C290 464 256 456 225 449C232 404 266 360 301 333z" fill="url(#plate)" stroke="#1a4a1e" strokeWidth="1" />
      <path d="M391 357L394 360C361 391 339 428 322 473L316 472C334 424 358 388 391 357z" fill="#2fa438" stroke="#1a4a1e" strokeWidth=".8" />

      {/* load arrow */}
      <path d="M275 361L292 382" stroke="#123fc0" strokeWidth="7.500" strokeLinecap="round" />
      <path d="M273.500 361L290 381" stroke="#1c58e0" strokeWidth="2" strokeLinecap="round" />
      <path d="M284 384.500C285 390 292 390 300.500 392.500 300 385 299.500 381 298.500 377.500 295 377 288 380 284 384.500z" fill="#0b2595" />
      <path d="M284 384.500C286 380 294 376 298.500 377.500 297 382 290 387 284 384.500z" fill="#1544c4" />

      {/* constrained bores */}
      <Cylinder back={[675.5, 190.7]} front={[702, 198]} rx={17.5} ry={25} bore={{ rx: 10.5, ry: 14 }} />
      <Cylinder back={[607.5, 233.5]} front={[633, 240.5]} rx={14.7} ry={20.7} bore={{ rx: 8, ry: 11 }} />

      {/* view cube */}
      <g>
        <path d="M931 147l6-3h30l3 4-6 3h-26z" fill="#dedede" />
        <path d="M936 120l3-3h25v28l-3 3-25-2z" fill="#f3f3f3" stroke="#b5b5b5" strokeWidth="1" strokeDasharray="4 2" />
        <path d="M937 121h25v27l-25-2z" fill="#e9eaec" />
        <path d="M939 125h19v17h-19z" fill="#e0e1e5" />
        <path d="M934.500 116L935.500 146" stroke="#6a5ae0" strokeWidth="1.200" />
        <path d="M935.500 146L966 148" stroke="#e0646a" strokeWidth="1.200" />
        <text x="948.5" y="136" fontSize="6" textAnchor="middle" fill="#6f757d">FRONT</text>
        <text x="934" y="114" fontSize="8" textAnchor="middle" fill="#6a5ae0">Z</text>
        <text x="969" y="151" fontSize="8" textAnchor="middle" fill="#e0646a">X</text>
      </g>
    </svg>
  );
}

function FloatingLock() {
  return (
    <div className="absolute top-[148px] left-[68.2%] flex h-[18px] items-center gap-1.5 bg-[#f2f2f2] px-px">
      <svg className="h-4 w-2" viewBox="0 0 8 16" stroke="#cfcfcf" strokeDasharray="1 1">
        <path d="M1.500 0v16M4.500 0v16" />
        <path d="M7.500 0v16" strokeDasharray="none" />
      </svg>
      <button type="button" aria-label="Constraint type" className="flex items-center gap-0.5 pr-px">
        <Lock className="h-[13px] w-[12px]" />
        <Caret />
      </button>
    </div>
  );
}

/* ---------- constraint dialog ---------- */

function ConstraintDialog() {
  return (
    <section aria-label="Structural constraints" className="absolute top-[97px] right-[21px] w-[192px] border border-[#d8d8d8] bg-[#f2f2f2] text-[#444]">
      <header className="flex h-[19px] items-center gap-2 border-b border-[#d8d8d8] px-1 text-[#5c5c5c]">
        <svg className="h-[7px] w-[7px]" viewBox="0 0 7 7">
          <circle cx="3.500" cy="3.500" r="3.500" fill="#2b2b2b" />
          <path d="M1.500 3.500h4" stroke="#fff" />
        </svg>
        <h2>STRUCTURAL CONSTRAINTS</h2>
      </header>
      <div className="grid grid-cols-[40px_1fr] items-center gap-y-[3px] border-b border-[#d8d8d8] py-0.5 pl-[9px]">
        <label htmlFor="constraint-type">Type</label>
        <div className="relative w-[117px]">
          <span className="pointer-events-none absolute inset-y-0 left-1 flex items-center"><Lock className="h-3 w-[10px]" /></span>
          <select id="constraint-type" className="block h-5 w-full appearance-none border border-[#dadada] bg-white pl-[17px] leading-none">
            <option>Fixed</option>
          </select>
          <span className="pointer-events-none absolute inset-y-0 right-1 flex items-center"><Caret /></span>
        </div>
        <span>Targets</span>
        <div className="flex items-center gap-2">
          <button type="button" className="flex h-5 w-[52px] items-center justify-center gap-1 bg-[#0d96db] whitespace-nowrap text-white">
            <svg className="h-[11px] w-[7px] shrink-0" viewBox="0 0 7 11">
              <path d="M.5.5v8.500l1.800-1.600 1.400 3.200 1.500-.7-1.300-3h2.600z" fill="#fff" stroke="#7c8a94" strokeWidth=".5" />
            </svg>
            2 Faces
          </button>
          <button type="button" aria-label="Clear targets">
            <svg className="h-[7px] w-[7px]" viewBox="0 0 7 7" stroke="#4d4d4d" strokeWidth="1.500">
              <path d="M.7.7l5.600 5.600M6.300.7L.7 6.300" />
            </svg>
          </button>
        </div>
        <span>Axis</span>
        <div className="flex gap-[5px] font-bold text-[#12202b]">
          {["x", "y", "z"].map((axis) => (
            <button key={axis} type="button" className="h-5 w-[17px] bg-[#0d96db] text-[10px]">
              U<span className="text-[9px]">{axis}</span>
            </button>
          ))}
        </div>
      </div>
      <footer className="flex h-[27px] items-center gap-2 pr-2 pl-1.5">
        <button type="button" aria-label="Information" className="mr-auto flex h-[9px] w-[9px] items-center justify-center rounded-full bg-black text-[8px] font-bold text-white">i</button>
        <button type="button" className="h-[15px] w-[46px] border border-[#c6c6c6] bg-[#ececec]">OK</button>
        <button type="button" className="h-[15px] w-[46px] border border-[#c6c6c6] bg-[#ececec]">Cancel</button>
      </footer>
    </section>
  );
}

/* ---------- navigation bar ---------- */

function NavBar() {
  return (
    <nav aria-label="View tools" className="absolute bottom-2 left-1/2 flex h-[18px] -translate-x-1/2 items-center gap-1.5 bg-[#f2f2f2] px-0.5">
      <IconButton label="Orbit" className="gap-0.5">
        <svg className="h-[13px] w-[13px]" viewBox="0 0 13 13" fill="none" stroke="#888" strokeWidth="1">
          <ellipse cx="6.500" cy="6.500" rx="5.800" ry="2.300" />
          <ellipse cx="6.500" cy="6.500" rx="2" ry="5" />
          <path d="M6.500 0v13M5 2l1.500-2L8 2M5 11l1.500 2L8 11" />
        </svg>
        <Caret />
      </IconButton>
      <IconButton label="Look at">
        <svg className="h-3 w-[13px]" viewBox="0 0 13 12">
          <path d="M.5 4h12v7.500H.5z" fill="#d9dcde" stroke="#777" />
          <path d="M2 4V2h3v2M7 4l3-3 1.500 3" fill="#aaa" stroke="#777" strokeWidth=".8" />
          <path d="M3 6h7v3.500H3z" fill="#fff" stroke="#888" strokeWidth=".8" />
          <path d="M4.500 7.800h4" stroke="#666" />
        </svg>
      </IconButton>
      <IconButton label="Pan" className="px-0.5">
        <svg className="h-[13px] w-[13px]" viewBox="0 0 13 13" fill="#fafafa" stroke="#777" strokeWidth=".9" strokeLinejoin="round">
          <path d="M4 12.500C3 10 1.500 8.500.7 7c.6-.8 1.500-.4 2.500 1L2.500 2.500c.8-.8 1.500-.3 1.600.5l.9 3-.2-5c.7-.7 1.500-.4 1.600.3l.3 4.700.9-4.500c.7-.6 1.400-.2 1.400.6L8.500 6.500l1.600-3c.8-.3 1.300.2 1 1L10 9c-.3 1.500-1 2-1.200 3.500z" />
        </svg>
      </IconButton>
      <IconButton label="Zoom">
        <svg className="h-[13px] w-[13px]" viewBox="0 0 13 13">
          <circle cx="4.800" cy="4.800" r="4" fill="#eef4f7" stroke="#777" />
          <path d="M7.800 7.800l4.200 4.500" stroke="#333" strokeWidth="1.900" />
          <path d="M9.500 2.500h3M11 1v3M9.500 6h3" stroke="#555" strokeWidth=".9" />
        </svg>
      </IconButton>
      <IconButton label="Zoom window" className="gap-0.5">
        <svg className="h-[13px] w-[13px]" viewBox="0 0 13 13">
          <rect x=".5" y=".5" width="11.500" height="11.500" fill="none" stroke="#aaa" strokeDasharray="1.500 1.500" />
          <circle cx="5.500" cy="5" r="4" fill="#e6f3f1" stroke="#777" />
          <path d="M8.300 8l4 4.500" stroke="#333" strokeWidth="1.900" />
        </svg>
        <Caret />
      </IconButton>
      <IconButton label="Display settings" className="gap-px">
        <svg className="h-3 w-[13px]" viewBox="0 0 13 12">
          <rect x=".5" y=".5" width="12" height="8.500" fill="#86b0ea" stroke="#6d7580" strokeWidth="1" />
          <path d="M4 11.300h5M6.500 9v2.500" stroke="#666" strokeWidth="1.500" />
        </svg>
        <Caret />
      </IconButton>
      <IconButton label="Grid and snaps" className="gap-0.5">
        <svg className="h-3 w-3" viewBox="0 0 12 12">
          <rect width="12" height="12" fill="#9b9b9b" />
          <path d="M3 0v12M6 0v12M9 0v12M0 3h12M0 6h12M0 9h12" stroke="#b5b5b5" strokeWidth=".7" />
        </svg>
        <Caret />
      </IconButton>
    </nav>
  );
}

export default function App() {
  return (
    <div className="flex h-screen min-h-[480px] flex-col overflow-hidden bg-white pt-[9px] text-[9px] leading-[11px] font-['Liberation_Sans',Arial,sans-serif]">
      <header className="mr-[7px] ml-1.5">
        <TopBar />
        <Ribbon />
      </header>
      <main className="relative flex min-h-0 flex-1 flex-col">
        <Viewport />
        <Browser />
        <FloatingLock />
        <ConstraintDialog />
        <NavBar />
        <p className="absolute right-[13px] bottom-2.5 font-bold text-[#222]">2 Faces | Min Distance : 34.00 mm</p>
      </main>
    </div>
  );
}
